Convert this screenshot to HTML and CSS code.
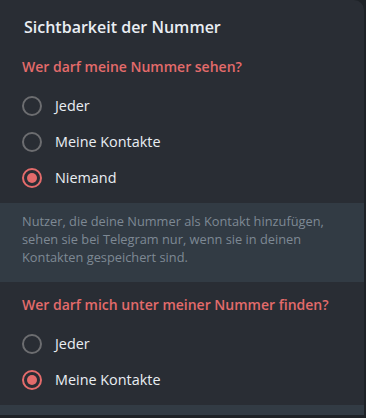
FILE: index.html
```html
<!DOCTYPE html>
<html lang="de">
<head>
<meta charset="utf-8">
<title>Sichtbarkeit der Nummer</title>
<link rel="stylesheet" href="styles.css">
</head>
<body>
<div class="panel">
  <div class="title">Sichtbarkeit der Nummer</div>

  <div class="section-head">Wer darf meine Nummer sehen?</div>
  <div class="options">
    <div class="option"><span class="radio"></span><span class="label">Jeder</span></div>
    <div class="option"><span class="radio"></span><span class="label">Meine Kontakte</span></div>
    <div class="option"><span class="radio checked"></span><span class="label">Niemand</span></div>
  </div>

  <div class="info">Nutzer, die deine Nummer als Kontakt hinzufügen, sehen sie bei Telegram nur, wenn sie in deinen Kontakten gespeichert sind.</div>

  <div class="section-head">Wer darf mich unter meiner Nummer finden?</div>
  <div class="options">
    <div class="option"><span class="radio"></span><span class="label">Jeder</span></div>
    <div class="option"><span class="radio checked"></span><span class="label">Meine Kontakte</span></div>
  </div>

  <div class="strip"></div>
</div>
</body>
</html>
```

FILE: styles.css
```css
html, body {
  margin: 0;
  padding: 0;
  background: #1e2227;
  height: 100%;
}

body {
  font-family: "Open Sans", "Noto Sans", sans-serif;
  overflow: hidden;
}

.panel {
  width: 364px;
  background: #292d34;
  border-top-right-radius: 10px;
  overflow: hidden;
}

.title {
  padding: 16px 24px 6px;
  font-size: 16px;
  line-height: 22px;
  font-weight: 600;
  color: #e9eef3;
}

.section-head {
  padding: 13px 22px 11px;
  font-size: 14px;
  line-height: 20px;
  font-weight: 600;
  color: #e36b6b;
}

.options {
  padding-bottom: 7px;
}

.option {
  height: 36px;
  display: flex;
  align-items: center;
  gap: 13px;
  padding-left: 22px;
}

.radio {
  width: 20px;
  height: 20px;
  box-sizing: border-box;
  border: 2px solid #6c6d70;
  border-radius: 50%;
  display: flex;
  align-items: center;
  justify-content: center;
  flex: none;
}

.radio.checked {
  border-color: #e36b6b;
}

.radio.checked::after {
  content: "";
  width: 10px;
  height: 10px;
  border-radius: 50%;
  background: #e36b6b;
}

.label {
  font-size: 14.4px;
  line-height: 20px;
  color: #e9eef3;
}

.info {
  background: #323b44;
  padding: 9px 22px 16px;
  font-size: 12.8px;
  line-height: 18px;
  color: #7e8994;
}

.strip {
  height: 10px;
  background: #323b44;
}
```
